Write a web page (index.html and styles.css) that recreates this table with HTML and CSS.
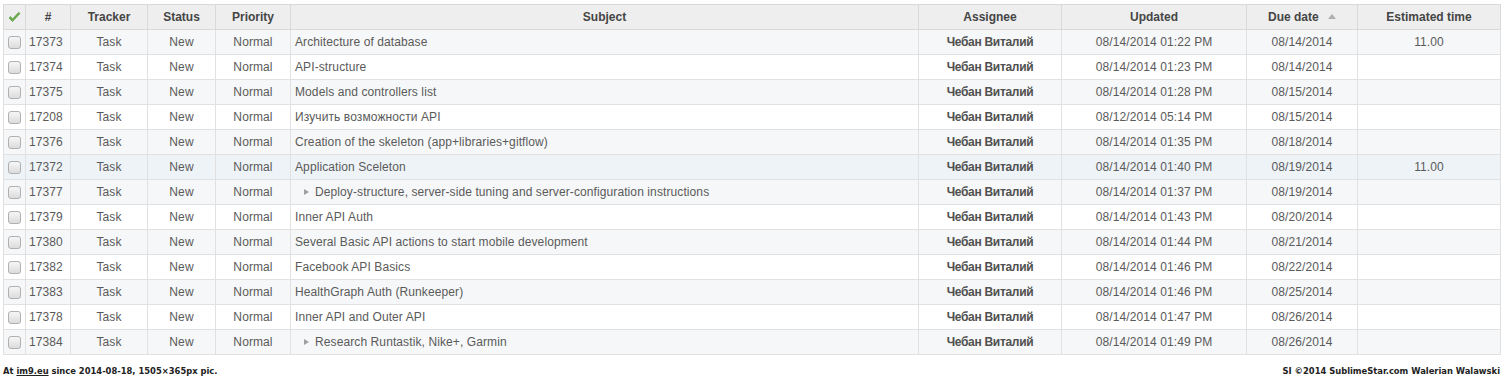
FILE: index.html
```html
<!DOCTYPE html>
<html>
<head>
<meta charset="utf-8">
<link rel="stylesheet" href="styles.css">
</head>
<body>
<table class="list">
<colgroup>
<col class="c-cb"><col class="c-id"><col class="c-tr"><col class="c-st"><col class="c-pr"><col class="c-sub"><col class="c-as"><col class="c-up"><col class="c-due"><col class="c-est">
</colgroup>
<thead>
<tr>
<th class="check"><svg width="13" height="11" viewBox="0 0 13 11"><path d="M1 6 L4.5 9.5 L12 1.5 L10.5 0.5 L4.5 7 L2.5 4.5 Z" fill="#6bb04a" stroke="#4a9030" stroke-width="0.6"/></svg></th>
<th>#</th><th>Tracker</th><th>Status</th><th>Priority</th><th>Subject</th><th>Assignee</th><th>Updated</th><th>Due date <span class="sort"></span></th><th>Estimated time</th>
</tr>
</thead>
<tbody>
<tr class="odd"><td class="cb"><span class="box"></span></td><td class="id">17373</td><td>Task</td><td>New</td><td>Normal</td><td class="sub">Architecture of database</td><td class="as">Чебан Виталий</td><td>08/14/2014 01:22 PM</td><td>08/14/2014</td><td>11.00</td></tr>
<tr><td class="cb"><span class="box"></span></td><td class="id">17374</td><td>Task</td><td>New</td><td>Normal</td><td class="sub">API-structure</td><td class="as">Чебан Виталий</td><td>08/14/2014 01:23 PM</td><td>08/14/2014</td><td></td></tr>
<tr class="odd"><td class="cb"><span class="box"></span></td><td class="id">17375</td><td>Task</td><td>New</td><td>Normal</td><td class="sub">Models and controllers list</td><td class="as">Чебан Виталий</td><td>08/14/2014 01:28 PM</td><td>08/15/2014</td><td></td></tr>
<tr><td class="cb"><span class="box"></span></td><td class="id">17208</td><td>Task</td><td>New</td><td>Normal</td><td class="sub">Изучить возможности API</td><td class="as">Чебан Виталий</td><td>08/12/2014 05:14 PM</td><td>08/15/2014</td><td></td></tr>
<tr class="odd"><td class="cb"><span class="box"></span></td><td class="id">17376</td><td>Task</td><td>New</td><td>Normal</td><td class="sub">Creation of the skeleton (app+libraries+gitflow)</td><td class="as">Чебан Виталий</td><td>08/14/2014 01:35 PM</td><td>08/18/2014</td><td></td></tr>
<tr class="hover"><td class="cb"><span class="box"></span></td><td class="id">17372</td><td>Task</td><td>New</td><td>Normal</td><td class="sub">Application Sceleton</td><td class="as">Чебан Виталий</td><td>08/14/2014 01:40 PM</td><td>08/19/2014</td><td>11.00</td></tr>
<tr class="odd"><td class="cb"><span class="box"></span></td><td class="id">17377</td><td>Task</td><td>New</td><td>Normal</td><td class="sub child"><span class="arrow"></span>Deploy-structure, server-side tuning and server-configuration instructions</td><td class="as">Чебан Виталий</td><td>08/14/2014 01:37 PM</td><td>08/19/2014</td><td></td></tr>
<tr><td class="cb"><span class="box"></span></td><td class="id">17379</td><td>Task</td><td>New</td><td>Normal</td><td class="sub">Inner API Auth</td><td class="as">Чебан Виталий</td><td>08/14/2014 01:43 PM</td><td>08/20/2014</td><td></td></tr>
<tr class="odd"><td class="cb"><span class="box"></span></td><td class="id">17380</td><td>Task</td><td>New</td><td>Normal</td><td class="sub">Several Basic API actions to start mobile development</td><td class="as">Чебан Виталий</td><td>08/14/2014 01:44 PM</td><td>08/21/2014</td><td></td></tr>
<tr><td class="cb"><span class="box"></span></td><td class="id">17382</td><td>Task</td><td>New</td><td>Normal</td><td class="sub">Facebook API Basics</td><td class="as">Чебан Виталий</td><td>08/14/2014 01:46 PM</td><td>08/22/2014</td><td></td></tr>
<tr class="odd"><td class="cb"><span class="box"></span></td><td class="id">17383</td><td>Task</td><td>New</td><td>Normal</td><td class="sub">HealthGraph Auth (Runkeeper)</td><td class="as">Чебан Виталий</td><td>08/14/2014 01:46 PM</td><td>08/25/2014</td><td></td></tr>
<tr><td class="cb"><span class="box"></span></td><td class="id">17378</td><td>Task</td><td>New</td><td>Normal</td><td class="sub">Inner API and Outer API</td><td class="as">Чебан Виталий</td><td>08/14/2014 01:47 PM</td><td>08/26/2014</td><td></td></tr>
<tr class="odd"><td class="cb"><span class="box"></span></td><td class="id">17384</td><td>Task</td><td>New</td><td>Normal</td><td class="sub child"><span class="arrow"></span>Research Runtastik, Nike+, Garmin</td><td class="as">Чебан Виталий</td><td>08/14/2014 01:49 PM</td><td>08/26/2014</td><td></td></tr>
</tbody>
</table>
<div class="footer">
<span>At <u>im9.eu</u> since 2014-08-18, 1505×365px pic.</span>
<span>SI ©2014 SublimeStar.com Walerian Walawski</span>
</div>
</body>
</html>
```
FILE: styles.css
```css
html, body { margin: 0; padding: 0; background: #fff; }
body { padding: 4px 5px 0 3px; font-family: "Liberation Sans", Arial, sans-serif; }
.list {
  border-collapse: collapse;
  table-layout: fixed;
  width: 1497px;
  font-size: 12px;
  color: #5a5a5a;
  border: 1px solid #d7d7d7;
}
.c-cb { width: 22px; } .c-id { width: 45px; } .c-tr { width: 77px; } .c-st { width: 68px; }
.c-pr { width: 75px; } .c-sub { width: 628px; } .c-as { width: 143px; } .c-up { width: 185px; }
.c-due { width: 111px; } .c-est { width: 143px; }
.list th {
  background: #eeeeee;
  color: #454545;
  font-weight: bold;
  height: 24px;
  padding: 0 4px;
  border: 1px solid #d9d9d9;
  white-space: nowrap;
}
.list td {
  height: 24px;
  padding: 0 4px;
  text-align: center;
  border: 1px solid #e1e1e1;
  white-space: nowrap;
  overflow: hidden;
  letter-spacing: 0.1px;
}
.list tr.odd td { background: #f6f7f8; }
.list tr.hover td { background: #eef3f8; }
.list td.id { text-align: left; padding-left: 3px; }
.list td.sub { text-align: left; }
.list td.sub.child { padding-left: 13px; }
.list td.as { font-weight: bold; color: #505050; letter-spacing: -0.3px; }
.list th.check, .list td.cb { padding: 0; }
.list th.check svg { display: block; margin: 0 auto; }
.box {
  display: block;
  width: 11px; height: 11px;
  margin: 1px auto 0;
  border: 1px solid #b0b0b0;
  border-radius: 3px;
  background: linear-gradient(#f6f6f6, #dcdcdc);
}
.sort {
  display: inline-block;
  width: 0; height: 0;
  margin-left: 6px;
  vertical-align: 2px;
  border-left: 4px solid transparent;
  border-right: 4px solid transparent;
  border-bottom: 5px solid #b0b0b0;
}
.arrow {
  display: inline-block;
  width: 0; height: 0;
  margin-right: 6px;
  vertical-align: 1px;
  border-top: 3.5px solid transparent;
  border-bottom: 3.5px solid transparent;
  border-left: 5px solid #a0a0a0;
}
.footer {
  display: flex;
  justify-content: space-between;
  margin-top: 10px;
  font-family: "DejaVu Sans Condensed", "DejaVu Sans", sans-serif;
  font-weight: bold;
  font-size: 9.3px;
  color: #222;
}
```
